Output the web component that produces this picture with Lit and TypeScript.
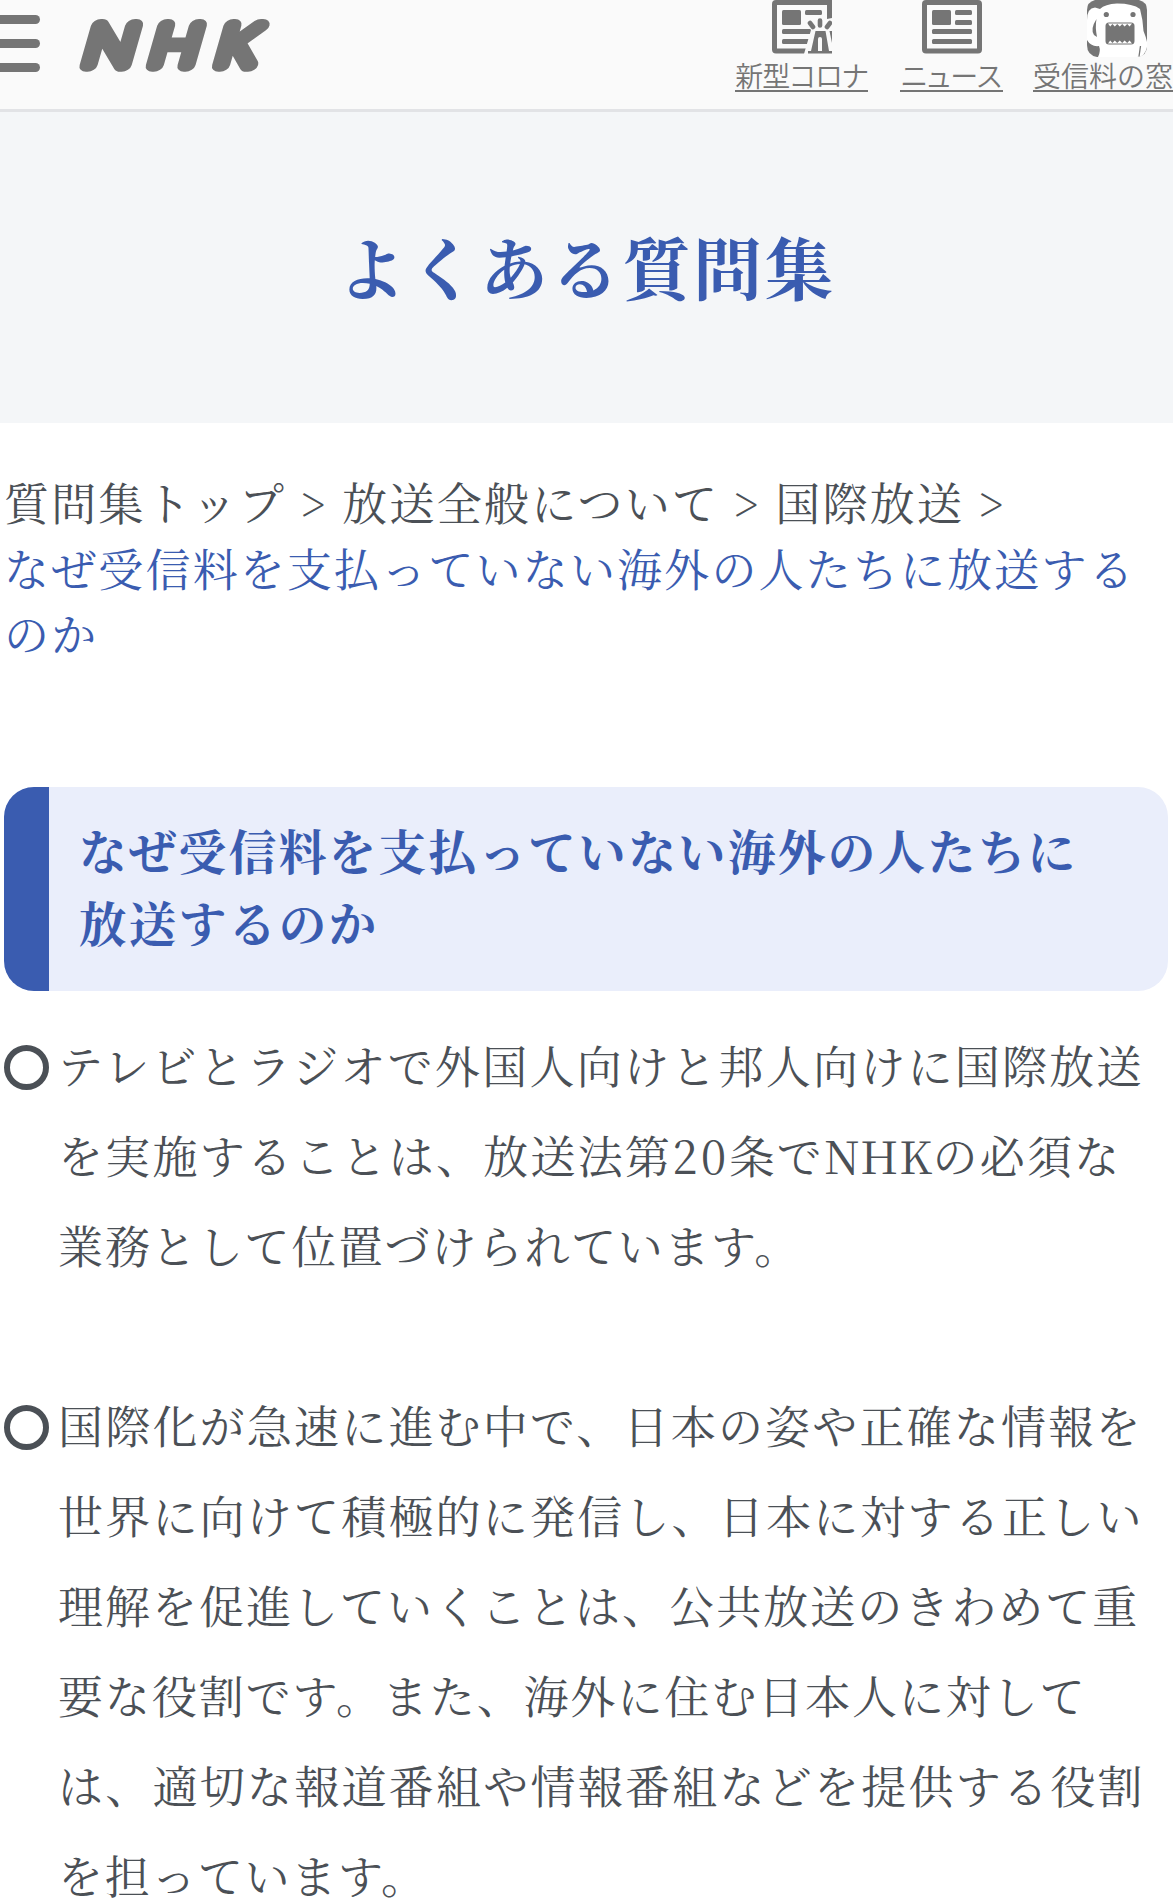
import { LitElement, html, css, svg } from "lit";
import { customElement } from "lit/decorators.js";
import { styleMap } from "lit/directives/style-map.js";

const newsFrame = svg`
  <rect x="2.5" y="2.5" width="55" height="48.5" rx="1.5" fill="none" stroke="#757575" stroke-width="5" />
  <rect x="10" y="10" width="19" height="15" rx="1.5" />`;

const coronaIcon = html`<svg class="icon" width="60" height="57" viewBox="0 0 60 57" fill="#757575">
  ${newsFrame}
  <rect x="10" y="29" width="30" height="5" rx="1.5" />
  <rect x="10" y="39" width="28" height="5" rx="1.5" />
  <path d="M32 57V54L39 30L33 22L38 17L44 15H60V57Z" fill="#fafafa" />
  <rect x="33" y="10" width="17" height="5" rx="1.5" />
  <path d="M55 0h5v18l-5 1z" />
  <path d="M43.5 31h10L57 51h3v2.5H36V51h3z" />
  <path d="M57.500 31L60 43V31z" />
  <path d="M46 51V39q0-2 2-2t2 2v12z" fill="#fafafa" />
  <path d="M48 20.500v5M38 23l3 4M58 23l-3 4" fill="none" stroke="#757575" stroke-width="4.600" stroke-linecap="round" />
</svg>`;

const newsIcon = html`<svg class="icon" width="60" height="57" viewBox="0 0 60 57" fill="#757575">
  ${newsFrame}
  <rect x="33" y="10" width="17" height="5" rx="1.5" />
  <rect x="33" y="20" width="17" height="5" rx="1.5" />
  <rect x="10" y="29" width="40" height="5" rx="1.500" />
  <rect x="10" y="39" width="40" height="5" rx="1.500" />
</svg>`;

const mascotIcon = html`<svg class="icon" width="60" height="57" viewBox="0 0 60 57">
  <path d="M8 0H52Q60 2 60 10V46Q60 56 50 57H10Q0 55 0 45V10Q0 2 8 0Z" fill="#757575" />
  <path d="M0 20Q0 8 8 7.500L13 9Q18 4 30 3.500Q46 3.500 53 9Q56 20 56.500 31Q59 37 60 42V47Q58 57 50 57H11Q14 51 12 46Q4 47 0 40Z" fill="#fff" />
  <path d="M9.500 19Q3 29 7 35L10 37Q8 27 9.500 19Z" fill="#757575" />
  <path d="M53.500 46L52 56.500" stroke="#757575" stroke-width="1.300" />
  <circle cx="19.300" cy="14.500" r="2.600" fill="#757575" />
  <circle cx="46" cy="14.500" r="2.600" fill="#757575" />
  <rect x="18.500" y="22.500" width="29" height="22" rx="3.500" fill="#757575" />
  <path d="M21 23.500h24l-2.400 3-2.400-2.500-2.600 2.500-2.400-2.500-2.400 2.500-2.600-2.500-2.400 2.500-2.400-2.500-2.200 2.500z" fill="#fff" />
  <path d="M21 43.500h24l-2.400-3-2.400 2.500-2.600-2.500-2.400 2.500-2.400-2.500-2.600 2.500-2.400-2.500-2.400 2.500-2.200-2.500z" fill="#fff" />
</svg>`;

const shortcuts = [
  { name: "corona", label: "新型コロナ", icon: coronaIcon },
  { name: "news", label: "ニュース", icon: newsIcon },
  { name: "fee", label: "受信料の窓口", icon: mascotIcon },
];

const BASE_SPACING = 2.25;

/* tighten: how much each line's letter spacing is reduced, in pixels */
const answers = [
  [
    { text: html`テレビとラジオで外国人向けと邦人向けに国際放送`, tighten: 0 },
    {
      text: html`を実施することは、放送法第<span class="digits">20</span>条で<span class="latin">NHK</span>の必須な`,
      tighten: 0,
    },
    { text: html`業務として位置づけられています。`, tighten: 0.6 },
  ],
  [
    { text: html`国際化が急速に進む中で、日本の姿や正確な情報を`, tighten: 0.05 },
    { text: html`世界に向けて積極的に発信し、日本に対する正しい`, tighten: 0.05 },
    { text: html`理解を促進していくことは、公共放送のきわめて重`, tighten: 0.24 },
    { text: html`要な役割です。また、海外に住む日本人に対して`, tighten: 0.33 },
    { text: html`は、適切な報道番組や情報番組などを提供する役割`, tighten: 0 },
    { text: html`を担っています。`, tighten: 0.6 },
  ],
];

@customElement("app-root")
export class AppRoot extends LitElement {
  static styles = css`
    :host {
      display: block;
      height: 1903px;
      overflow: hidden;
      background: #fff;
      color: #4b5056;
      font-family: "Noto Serif CJK JP", "Noto Sans CJK JP", serif;
    }
    * { box-sizing: border-box; }
    h1, h2, p, ul { margin: 0; padding: 0; }
    a { color: inherit; text-decoration: none; }
    .header {
      display: flex;
      height: 112px;
      overflow: hidden;
      background: #fafafa;
      border-bottom: 3px solid #e2e3e6;
    }
    .menu {
      display: flex;
      flex: none;
      flex-direction: column;
      gap: 15px;
      width: 40px;
      padding-top: 15px;
    }
    .bar {
      height: 9px;
      background: #757575;
      border-radius: 0 4.5px 4.5px 0;
    }
    .logo { flex: none; margin-left: 30px; }
    .wordmark {
      font: 100 54px Inter, "Liberation Sans", sans-serif;
      fill: #757575;
      stroke: #757575;
      stroke-width: 13.600px;
      stroke-linejoin: round;
    }
    .shortcuts {
      display: flex;
      flex: none;
      margin-left: 455px;
      font-family: "Noto Sans CJK JP", sans-serif;
      font-weight: 350;
      font-size: 28px;
      font-feature-settings: "palt";
      color: #757575;
    }
    .shortcut {
      display: flex;
      flex: none;
      flex-direction: column;
      align-items: center;
    }
    .corona { width: 133px; margin-right: 32px; letter-spacing: -0.8px; }
    .news { width: 103px; margin-right: 30px; }
    .fee { width: 168px; font-feature-settings: normal; }
    .icon { display: block; }
    .label {
      width: 100%;
      height: 35px;
      line-height: 37px;
      border-bottom: 2px solid #757575;
      white-space: nowrap;
      text-align: center;
    }
    .hero {
      display: flex;
      align-items: center;
      justify-content: center;
      height: 311px;
      padding-bottom: 4px;
      background: #f4f6f8;
      color: #3a5cb0;
    }
    .title {
      font-size: 68px;
      letter-spacing: 3.200px;
      font-weight: 700;
      line-height: 100px;
      padding-left: 1px;
    }
    .crumbs {
      height: 245px;
      padding: 46px 0 0 4px;
      font-size: 45px;
      line-height: 65.500px;
      letter-spacing: 2.160px;
      white-space: nowrap;
    }
    .path { letter-spacing: 2.260px; }
    .current { color: #3a5cb0; }
    .question {
      display: flex;
      height: 204px;
      margin: 119px 5px 0 4px;
      padding: 27px 0 0 30px;
      border-left: 45px solid #3a5cb0;
      border-radius: 30px;
      background: #eaeefb;
      color: #3a5cb0;
      font-size: 47.600px;
      line-height: 72px;
      letter-spacing: 2.330px;
      white-space: nowrap;
    }
    .answers { padding: 29px 0 0 4px; list-style: none; }
    .answer {
      display: flex;
      gap: 9px;
      margin-bottom: 90px;
      font-size: 45px;
      line-height: 90px;
      white-space: nowrap;
    }
    .ring {
      flex: none;
      width: 45px;
      height: 45px;
      margin-top: 25px;
      border: 6px solid #4b5056;
      border-radius: 50%;
    }
    .line { height: 90px; }
    .digits { letter-spacing: 3.500px; }
    .latin { letter-spacing: 0.600px; }
  `;

  render() {
    return html`
      <header class="header">
        <div class="menu"><span class="bar"></span><span class="bar"></span><span class="bar"></span></div>
        <svg class="logo" width="210" height="100" viewBox="70 0 210 100">
          <g transform="translate(0 65) skewX(-16) scale(1.210 1)">
            <text class="wordmark" x="66.500 121.300 176" y="0">NHK</text>
          </g>
        </svg>
        <nav class="shortcuts">
          ${shortcuts.map(
            (s) => html`<a class="shortcut ${s.name}">${s.icon}<span class="label">${s.label}</span></a>`
          )}
        </nav>
      </header>
      <section class="hero"><h1 class="title">よくある質問集</h1></section>
      <nav class="crumbs">
        <div class="path">質問集トップ &gt; 放送全般について &gt; 国際放送 &gt;</div>
        <div class="current">なぜ受信料を支払っていない海外の人たちに放送する<br />のか</div>
      </nav>
      <h2 class="question">なぜ受信料を支払っていない海外の人たちに<br />放送するのか</h2>
      <ul class="answers">
        ${answers.map(
          (lines) => html`<li class="answer">
            <span class="ring"></span>
            <div>
              ${lines.map(
                (line) => html`<p
                  class="line"
                  style=${styleMap({ letterSpacing: `${BASE_SPACING - line.tighten}px` })}
                >${line.text}</p>`
              )}
            </div>
          </li>`
        )}
      </ul>
    `;
  }
}
